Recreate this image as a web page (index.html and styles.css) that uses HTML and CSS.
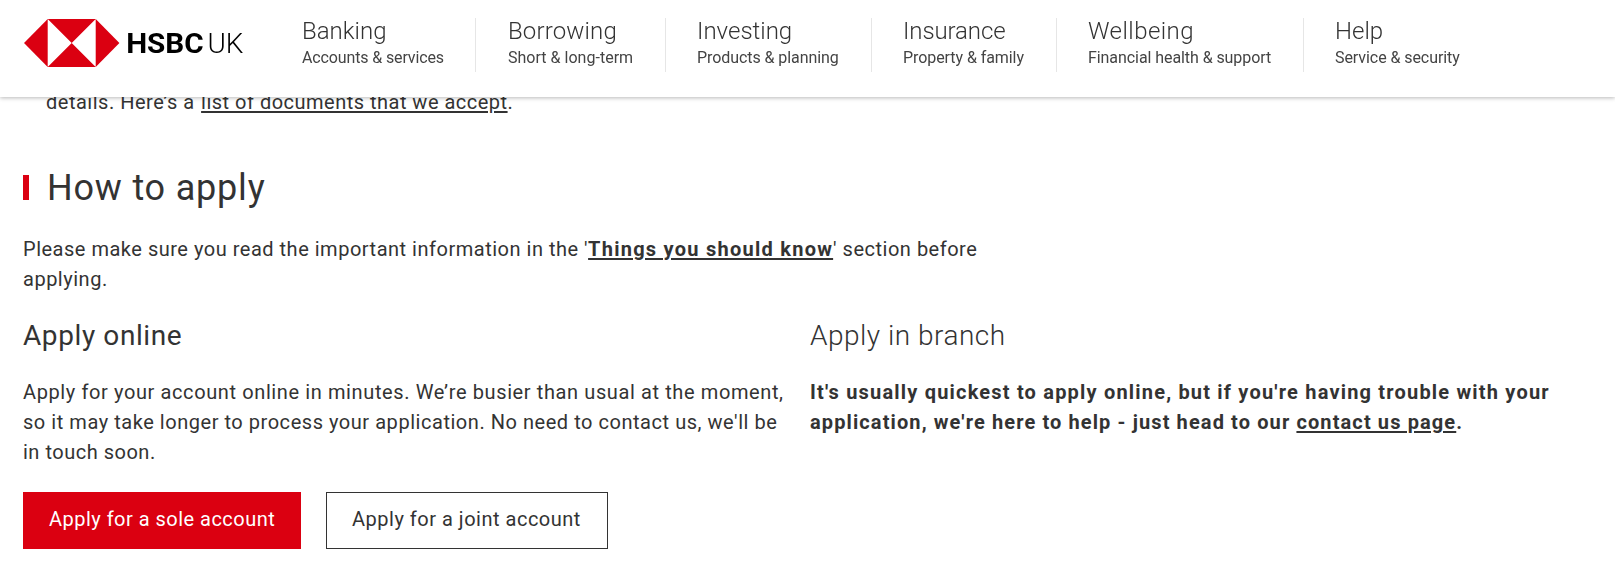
FILE: index.html
```html
<!DOCTYPE html>
<html lang="en">
<head>
	<meta charset="utf-8">
	<title>How to apply | HSBC UK</title>
	<link rel="stylesheet" href="styles.css">
</head>
<body>
	<header class="header">
		<a class="logo" href="#">
			<svg width="222" height="48" viewBox="0 0 222 48">
				<path fill="#db0011" d="M0 24 23.7 0h48L95.4 24 71.7 48h-48z"/>
				<path fill="#fff" d="M23.7 0l24 24-24 24zM71.7 0l-24 24 24 24z"/>
				<text class="logo-name" x="102.2" y="34" textLength="77.5" lengthAdjust="spacingAndGlyphs">HSBC</text>
				<text class="logo-uk" x="183.5" y="34" textLength="36" lengthAdjust="spacingAndGlyphs">UK</text>
			</svg>
		</a>
		<nav class="nav">
			<a class="nav-item banking" href="#"><span class="nav-title">Banking</span><span class="nav-sub">Accounts &amp; services</span></a>
			<a class="nav-item borrowing" href="#"><span class="nav-title">Borrowing</span><span class="nav-sub">Short &amp; long-term</span></a>
			<a class="nav-item investing" href="#"><span class="nav-title">Investing</span><span class="nav-sub">Products &amp; planning</span></a>
			<a class="nav-item insurance" href="#"><span class="nav-title">Insurance</span><span class="nav-sub">Property &amp; family</span></a>
			<a class="nav-item wellbeing" href="#"><span class="nav-title">Wellbeing</span><span class="nav-sub">Financial health &amp; support</span></a>
			<a class="nav-item help" href="#"><span class="nav-title">Help</span><span class="nav-sub">Service &amp; security</span></a>
		</nav>
	</header>
	<main class="main">
		<p class="details">details. Here’s a <a href="#">list of documents that we accept</a>.</p>
		<h2 class="title">How to apply</h2>
		<p class="intro">Please make sure you read the important information in the '<a class="strong" href="#">Things you should know</a>' section before<br>applying.</p>
		<div class="columns">
			<section class="column">
				<h3 class="subtitle">Apply online</h3>
				<p><span class="wide">Apply for your account online in minutes. We’re busier than usual at the moment,</span><br><span class="mid">so it may take longer to process your application. No need to contact us, we'll be</span><br>in touch soon.</p>
				<div class="buttons">
					<a class="button primary" href="#">Apply for a sole account</a>
					<a class="button secondary" href="#">Apply for a joint account</a>
				</div>
			</section>
			<section class="column">
				<h3 class="subtitle light">Apply in branch</h3>
				<p class="strong branch">It's usually quickest to apply online, but if you're having trouble with your<br><span class="narrow">application, we're here to help - just head to our <a href="#">contact us page</a>.</span></p>
			</section>
		</div>
	</main>
</body>
</html>
```
FILE: styles.css
```css
* {
	box-sizing: border-box;
}
body {
	margin: 0;
	background: #fff;
	color: #333;
	font: 400 20px/30px Roboto, "Liberation Sans", sans-serif;
	letter-spacing: 0.51px;
	overflow: hidden;
}
h2, h3, p {
	margin: 0;
	white-space: nowrap;
}
a {
	color: inherit;
	text-underline-offset: 2px;
	text-decoration-thickness: 2px;
}

/* header */
.header {
	position: fixed;
	top: 0;
	left: 0;
	right: 0;
	z-index: 10;
	display: flex;
	height: 97px;
	background: #fff;
	box-shadow: 0 1px 4px rgba(0, 0, 0, 0.28);
	letter-spacing: 0;
}
.logo {
	width: 270px;
	padding: 19px 0 0 24px;
}
.logo svg {
	display: block;
}
.logo-name {
	fill: #000;
	font-size: 28px;
	font-weight: 700;
}
.logo-uk {
	fill: #000;
	font-size: 28px;
	font-weight: 300;
}
.nav {
	display: flex;
	height: 54px;
	margin-top: 18px;
}
.nav-item {
	display: flex;
	flex-direction: column;
	padding-left: 31px;
	border-right: 1px solid #e6e6e6;
	text-decoration: none;
	white-space: nowrap;
}
.nav-title {
	font-size: 24px;
	font-weight: 300;
	line-height: 26px;
}
.nav-sub {
	color: #444;
	font-size: 16px;
	line-height: 28px;
	letter-spacing: -0.07px;
}
.banking {
	width: 206px;
	padding-left: 32px;
}
.banking .nav-sub {
	letter-spacing: -0.13px;
}
.borrowing {
	width: 190px;
	padding-left: 32px;
}
.borrowing .nav-title {
	letter-spacing: 0.15px;
}
.borrowing .nav-sub {
	letter-spacing: 0.02px;
}
.investing {
	width: 206px;
}
.insurance {
	width: 185px;
}
.insurance .nav-title {
	letter-spacing: -0.1px;
}
.wellbeing {
	width: 247px;
}
.wellbeing .nav-title {
	letter-spacing: 0.45px;
}
.help {
	border-right: 0;
}

/* content */
.main {
	padding: 87px 23px 0;
}
.details {
	padding-left: 23px;
}
.details a {
	margin-left: 1px;
	letter-spacing: 0.49px;
}
.title {
	display: flex;
	align-items: center;
	margin-top: 51px;
	font-size: 36px;
	font-weight: 400;
	line-height: 40px;
	letter-spacing: 0.8px;
}
.title::before {
	content: "";
	width: 6px;
	height: 25px;
	margin-right: 18px;
	margin-bottom: 1px;
	background: #db0011;
}
.intro {
	margin-top: 26px;
}
.strong {
	font-weight: 700;
	letter-spacing: 1.25px;
}
.columns {
	display: grid;
	grid-template-columns: 787px 1fr;
	margin-top: 24px;
}
.subtitle {
	margin-bottom: 23px;
	font-size: 28px;
	font-weight: 400;
	line-height: 36px;
	letter-spacing: 0.6px;
}
.light {
	font-weight: 300;
	letter-spacing: 0.5px;
}
.wide {
	letter-spacing: 0.61px;
}
.mid {
	letter-spacing: 0.54px;
}
.branch {
	letter-spacing: 1.19px;
}
.narrow {
	letter-spacing: 1.11px;
}
.buttons {
	display: flex;
	gap: 25px;
	margin-top: 25px;
}
.button {
	height: 57px;
	padding: 11px 25px;
	border: 1px solid #333;
	text-decoration: none;
	white-space: nowrap;
}
.primary {
	width: 278px;
	background: #db0011;
	border-color: #db0011;
	color: #fff;
	letter-spacing: 0.48px;
}
.secondary {
	width: 282px;
}
```
